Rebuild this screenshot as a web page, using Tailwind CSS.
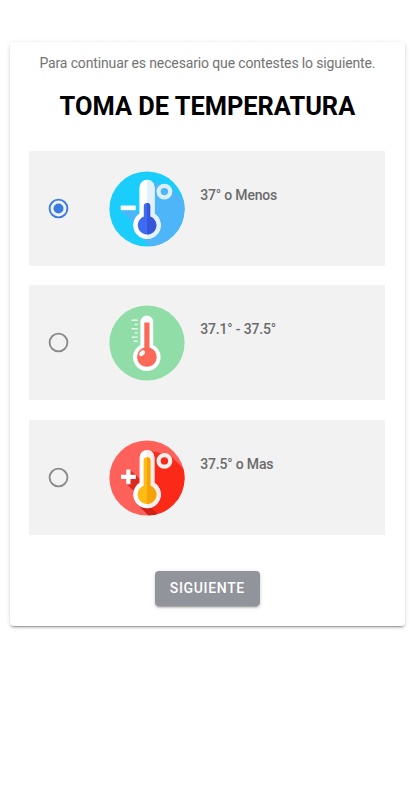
<!DOCTYPE html>
<html lang="es">
<head>
    <meta charset="UTF-8">
    <meta name="viewport" content="width=device-width, initial-scale=1.0">
    <title>Toma de temperatura</title>
    <script src="https://cdn.jsdelivr.net/npm/@tailwindcss/browser@4"></script>
</head>
<body class="min-h-screen pt-[41.7px] bg-white font-[Roboto,sans-serif]">
    <main class="ml-[9.7px] w-[395.4px] h-[584.3px] rounded-[4px] bg-white shadow-[0_3px_1px_-2px_rgba(0,0,0,0.2),0_2px_2px_0_rgba(0,0,0,0.14),0_1px_5px_0_rgba(0,0,0,0.12)] flex flex-col items-center">
        <p class="mt-[11.3px] text-[14px] leading-[20px] tracking-[-0.14px] text-[#737373] whitespace-nowrap">Para continuar es necesario que contestes lo siguiente.</p>
        <h1 class="mt-[17px] text-[25.4px] leading-[32px] font-bold text-black whitespace-nowrap">TOMA DE TEMPERATURA</h1>

        <form class="mt-[29px] w-[355.8px] flex flex-col gap-[19.9px]">
            <!-- 37 o menos -->
            <label class="flex h-[114.6px] bg-[#f2f2f2]">
                <svg class="ml-[18.6px] mt-[47px] size-[21px] shrink-0" viewBox="0 0 21 21" fill="none">
                    <circle cx="10.5" cy="10.5" r="8.9" stroke="#3a7be0" stroke-width="1.9" />
                    <circle cx="10.5" cy="10.5" r="5" fill="#3a7be0" />
                </svg>
                <svg class="ml-[40.2px] mt-[19.7px] size-[76px] shrink-0" viewBox="0 0 76 76">
                    <defs>
                        <clipPath id="disc"><circle cx="38" cy="38" r="37.6" /></clipPath>
                    </defs>
                    <circle cx="38" cy="38" r="37.6" fill="#1bcdfb" />
                    <g clip-path="url(#disc)" fill="#4db5f8">
                        <path d="M61 15 76 30V76H47L28 64 38 10Z" />
                        <path d="M11.7 39.2H26.7L30 43 27 54.5Z" />
                        <path d="M28 62 42 76H60V50Z" />
                    </g>
                    <rect x="11.7" y="34.5" width="15" height="4.7" fill="#fff" />
                    <circle cx="55.4" cy="20.6" r="5.8" fill="none" stroke="#d9effd" stroke-width="4.2" />
                    <path d="M30.4 42.7V16.4a7.6 7.6 0 0 1 15.2 0v26.3A13.8 13.8 0 1 1 30.4 42.7Z" fill="#fff" />
                    <path d="M38 8.8a7.6 7.6 0 0 1 7.6 7.6v26.3A13.8 13.8 0 0 1 38 68Z" fill="#e3f1fd" />
                    <path d="M34.8 45.6V35.1a3.2 3.2 0 0 1 6.4 0v10.5A9.2 9.2 0 1 1 34.8 45.6Z" fill="#3d6cf3" />
                    <path d="M38 31.9a3.2 3.2 0 0 1 3.2 3.2v10.5A9.2 9.2 0 0 1 38 63.5Z" fill="#3556d8" />
                </svg>
                <span class="ml-[15px] mt-[33.6px] text-[14px] leading-[20px] tracking-[-0.18px] font-medium text-[#6b6b6b]">37° o Menos</span>
            </label>

            <!-- 37.1 a 37.5 -->
            <label class="flex h-[114.6px] bg-[#f2f2f2]">
                <svg class="ml-[18.6px] mt-[47px] size-[21px] shrink-0" viewBox="0 0 21 21" fill="none">
                    <circle cx="10.5" cy="10.5" r="8.9" stroke="#8a8a8a" stroke-width="1.9" />
                </svg>
                <svg class="ml-[40.2px] mt-[19.7px] size-[76px] shrink-0" viewBox="0 0 76 76">
                    <circle cx="38" cy="38" r="37.6" fill="#91dda8" />
                    <path d="M22.7 15.3h6M25.7 19.5h3M22.7 23.7h6M25.7 27.9h3M22.7 32.1h6M24.7 36.3h4" stroke="#f0faf3" stroke-width="1.4" />
                    <path d="M31.4 40V17a6.4 6.4 0 0 1 12.8 0v23A13.8 13.8 0 1 1 31.4 40Z" fill="#fff" />
                    <path d="M35.3 17.4h5.2v25.2A9.8 9.8 0 1 1 35.3 42.6Z" fill="#fb6a58" />
                    <ellipse cx="33.1" cy="48.3" rx="3.3" ry="2.2" transform="rotate(-45 33.1 48.3)" fill="#fff" />
                </svg>
                <span class="ml-[15px] mt-[33.6px] text-[14px] leading-[20px] tracking-[-0.18px] font-medium text-[#6b6b6b]">37.1° - 37.5°</span>
            </label>

            <!-- 37.5 o mas -->
            <label class="flex h-[114.6px] bg-[#f2f2f2]">
                <svg class="ml-[18.6px] mt-[47px] size-[21px] shrink-0" viewBox="0 0 21 21" fill="none">
                    <circle cx="10.5" cy="10.5" r="8.9" stroke="#8a8a8a" stroke-width="1.9" />
                </svg>
                <svg class="ml-[40.2px] mt-[19.7px] size-[76px] shrink-0" viewBox="0 0 76 76">
                    <circle cx="38" cy="38" r="37.6" fill="#fe6159" />
                    <g clip-path="url(#disc)">
                        <path d="M61 15.3 76 30.3V76H46L28 64 38 10Z" fill="#fb2a18" />
                        <path d="M21 30 27 35 31 39 28 54 17.5 44Z" fill="#dd2a20" />
                        <path d="M28 64 41 77H52L40 66Z" fill="#cf2018" />
                    </g>
                    <path d="M19.4 29.5v14.8M12 36.9h14.8" stroke="#fff" stroke-width="4.2" />
                    <circle cx="55.4" cy="20.9" r="5.8" fill="none" stroke="#fdeeee" stroke-width="4.2" />
                    <path d="M30.6 42.8V17.3a7.4 7.4 0 0 1 14.8 0v25.5A13.8 13.8 0 1 1 30.6 42.8Z" fill="#fff" />
                    <path d="M38 9.9a7.4 7.4 0 0 1 7.4 7.4v25.5A13.8 13.8 0 0 1 38 68.3Z" fill="#fdeeee" />
                    <path d="M34.6 45.8V20.6a3.4 3.4 0 0 1 6.8 0v25.2A9.4 9.4 0 1 1 34.6 45.8Z" fill="#fdbb14" />
                    <path d="M38 17.2a3.4 3.4 0 0 1 3.4 3.4v25.2A9.4 9.4 0 0 1 38 64Z" fill="#f6a208" />
                </svg>
                <span class="ml-[15px] mt-[33.6px] text-[14px] leading-[20px] tracking-[-0.18px] font-medium text-[#6b6b6b]">37.5° o Mas</span>
            </label>
        </form>

        <button class="mt-[36.3px] w-[105.4px] h-[35.6px] rounded-[4px] bg-[#92949c] text-[14px] leading-[35px] font-medium tracking-[0.65px] text-white shadow-[0_3px_1px_-2px_rgba(0,0,0,0.2),0_2px_2px_0_rgba(0,0,0,0.14),0_1px_5px_0_rgba(0,0,0,0.12)]">SIGUIENTE</button>
    </main>
</body>
</html>
